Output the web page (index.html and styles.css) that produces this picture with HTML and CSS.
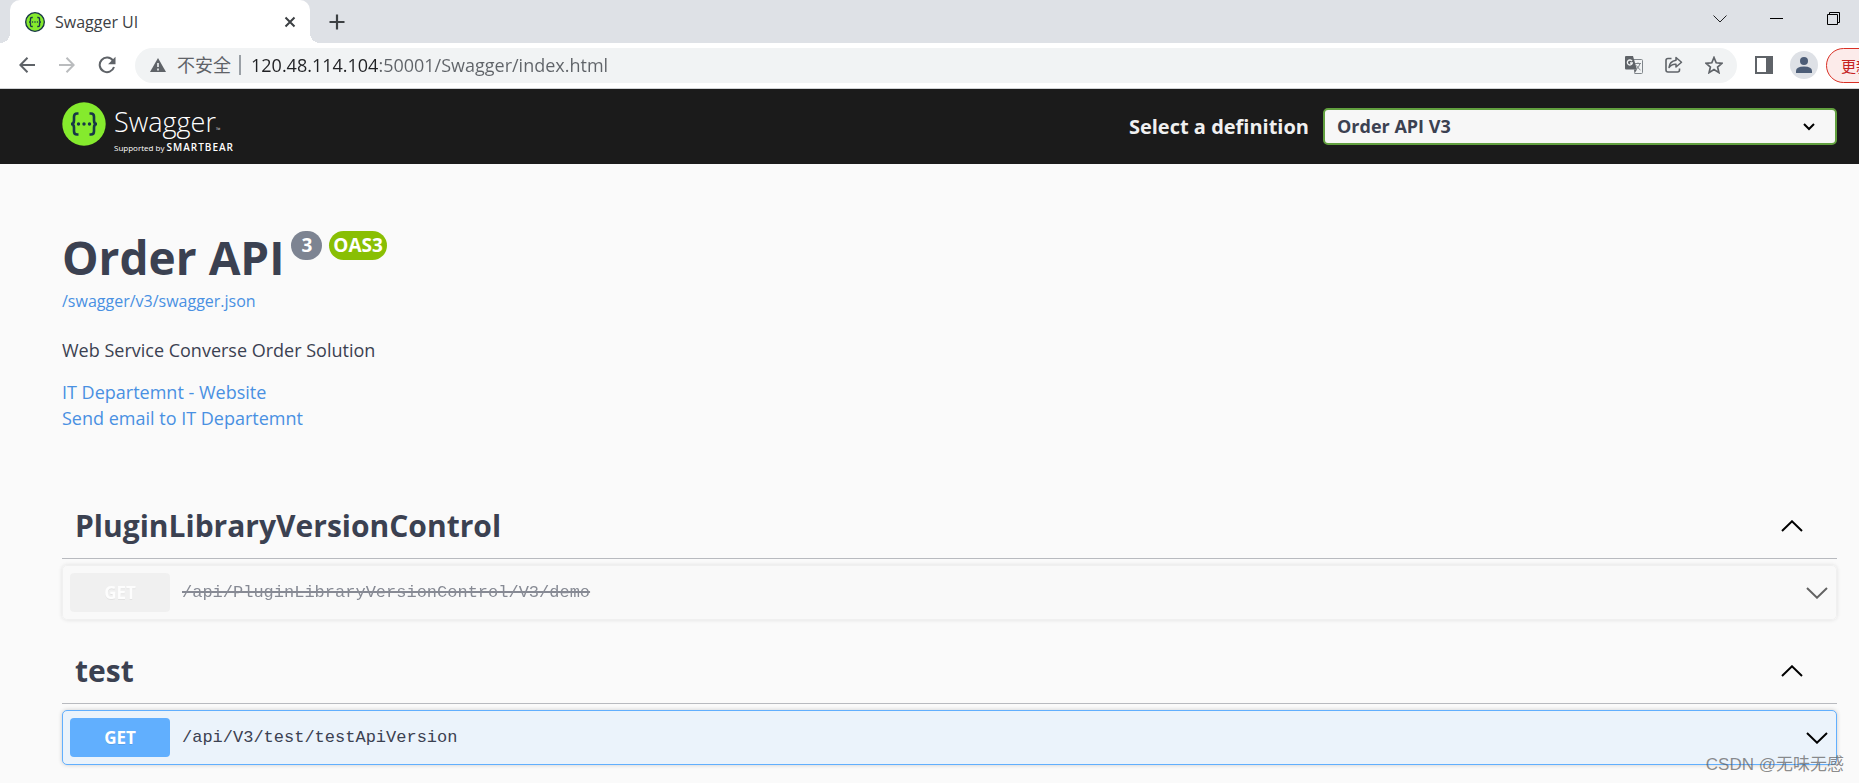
FILE: index.html
```html
<!DOCTYPE html>
<html lang="en">
<head>
    <meta charset="UTF-8">
    <meta name="viewport" content="width=device-width, initial-scale=1.0">
    <title>Swagger UI</title>
    <link rel="stylesheet" href="styles.css">
</head>
<body>
    <!-- Browser window -->
    <div class="tabstrip">
        <div class="tab">
            <svg class="favicon" viewBox="0 0 44 44"><circle cx="22" cy="22" r="20.5" fill="#85ea2d" stroke="#173647" stroke-width="3"/><g fill="none" stroke="#173647" stroke-width="3"><path d="M17 12h-2q-3 0-3 3v4q0 3-3 3q3 0 3 3v4q0 3 3 3h2M27 12h2q3 0 3 3v4q0 3 3 3q-3 0-3 3v4q0 3-3 3h-2"/></g><g fill="#173647"><circle cx="16.500" cy="22" r="1.800"/><circle cx="22" cy="22" r="1.800"/><circle cx="27.500" cy="22" r="1.800"/></g></svg>
            <span class="tab-title">Swagger UI</span>
            <button class="tab-close" aria-label="Close"><svg width="12" height="12" viewBox="0 0 12 12"><path d="M1.500 1.500l9 9M10.500 1.500l-9 9" stroke="#3c4043" stroke-width="2"/></svg></button>
        </div>
        <button class="tab-new" aria-label="New tab"><svg width="16" height="16" viewBox="0 0 16 16"><path d="M8 0.500v15M0.500 8h15" stroke="#3c4043" stroke-width="2.200"/></svg></button>
        <div class="window-controls">
            <button aria-label="Search tabs"><svg width="14" height="8" viewBox="0 0 14 8"><path d="M0.500 0.500L7 7l6.500-6.500" fill="none" stroke="#202124"/></svg></button>
            <button aria-label="Minimize"><svg width="13" height="13" viewBox="0 0 13 13"><path d="M0 6.500h13" stroke="#000"/></svg></button>
            <button aria-label="Restore"><svg width="13" height="13" viewBox="0 0 13 13"><path d="M0.500 2.500h10v10h-10zM2.500 2.500v-2h10v10h-2" fill="none" stroke="#000"/></svg></button>
        </div>
    </div>
    <div class="toolbar">
        <button class="tool" aria-label="Back"><svg width="16" height="16" viewBox="0 0 16 16"><path d="M16 8H1.500M8.500 0.800L1.300 8l7.200 7.200" fill="none" stroke="#5f6368" stroke-width="2"/></svg></button>
        <button class="tool" aria-label="Forward"><svg width="16" height="16" viewBox="0 0 16 16"><path d="M0 8h14.500M7.500 0.800L14.700 8l-7.200 7.200" fill="none" stroke="#babcbe" stroke-width="2"/></svg></button>
        <button class="tool" aria-label="Reload"><svg width="18" height="18" viewBox="0 0 18 18"><path d="M15 4.700A7.300 7.300 0 1 0 16 11" fill="none" stroke="#5f6368" stroke-width="2"/><path d="M17.500 0.800v7.400h-7.400z" fill="#5f6368"/></svg></button>
        <div class="omnibox">
            <svg width="16" height="14" viewBox="0 0 16 14"><path d="M8 0l8 14H0z" fill="#5f6368"/><path d="M8 5v4M8 10.500v2" stroke="#f1f3f4" stroke-width="1.600"/></svg>
            <label class="security" for="url">不安全</label>
            <input class="url" id="url" type="text" value="120.48.114.104:50001/Swagger/index.html">
            <button class="tool" aria-label="Translate"><svg width="18" height="18" viewBox="0 0 18 18"><path d="M7.500 3.500h9q1 0 1 1v12q0 1-1 1H9.500" fill="none" stroke="#80868b"/><path d="M1 0h7l4 13.500H1q-1 0-1-1V1q0-1 1-1z" fill="#5f6368"/><path d="M9 13.500h3l-2.500 4z" fill="#5f6368"/><path d="M7 5.200A2.500 2.500 0 1 0 7.300 7H5" fill="none" stroke="#f1f3f4" stroke-width="1.300"/><path d="M10 7.500h6M13 6.500v1M15 7.500q-1 4-4 6M11.500 9.500q1.500 3 4 4.500" fill="none" stroke="#80868b"/></svg></button>
            <button class="tool" aria-label="Share"><svg width="18" height="18" viewBox="0 0 18 18"><path d="M6.500 2.500H3q-2 0-2 2V14q0 2 2 2h9.500q2 0 2-2v-1.500" fill="none" stroke="#5f6368" stroke-width="1.600"/><path d="M11 1.500L16.500 6.200L11 11V8.200q-4.500-0.400-7 3.300q0.500-6 7-7.200z" fill="none" stroke="#5f6368" stroke-width="1.500" stroke-linejoin="round"/></svg></button>
            <button class="tool" aria-label="Bookmark"><svg width="18" height="18" viewBox="0 0 18 18"><path d="M9 1.500l2.200 5.300 5.700 0.500-4.300 3.700 1.300 5.600L9 13.600 4.100 16.600l1.300-5.600-4.300-3.700 5.700-0.500z" fill="none" stroke="#5f6368" stroke-width="1.700"/></svg></button>
        </div>
        <button class="tool" aria-label="Side panel"><svg width="18" height="18" viewBox="0 0 18 18"><path d="M0 0h18v18H0zM2 2v14h9V2z" fill="#5f6368" fill-rule="evenodd"/></svg></button>
        <button class="tool" aria-label="Profile"><svg width="28" height="28" viewBox="0 0 28 28"><circle cx="14" cy="14" r="14" fill="#dee1e6"/><circle cx="14" cy="10" r="4" fill="#4c5d77"/><path d="M6 22v-2q0-4.500 8-4.500t8 4.500v2z" fill="#4c5d77"/></svg></button>
        <div class="update-slot"><button class="update">更新</button></div>
    </div>

    <!-- Swagger UI -->
    <header class="topbar">
        <a class="logo" href="#">
            <svg width="44" height="44" viewBox="0 0 44 44"><circle cx="22" cy="22" r="21.700" fill="#85ea2d"/><g fill="none" stroke="#173647" stroke-width="2.600"><path d="M16.500 11.500h-1.500q-3 0-3 3.200v3.800q0 3.500-3 3.500q3 0 3 3.500v3.800q0 3.200 3 3.200h1.500M27.500 11.500h1.500q3 0 3 3.200v3.800q0 3.500 3 3.500q-3 0-3 3.500v3.800q0 3.200-3 3.200h-1.500"/></g><g fill="#173647"><circle cx="16.500" cy="22" r="1.700"/><circle cx="22" cy="22" r="1.700"/><circle cx="27.500" cy="22" r="1.700"/></g></svg>
            <span class="logo-text">
                <span class="logo-name">Swagger<small>™</small></span>
                <span class="logo-by">Supported by <b>SMARTBEAR</b></span>
            </span>
        </a>
        <div class="definition">
            <label for="select">Select a definition</label>
            <select id="select">
                <option>Order API V3</option>
            </select>
        </div>
    </header>

    <main class="wrapper">
        <section class="info">
            <h2 class="title">Order API <span class="version">3</span><span class="version oas">OAS3</span></h2>
            <a class="spec" href="#">/swagger/v3/swagger.json</a>
            <p class="description">Web Service Converse Order Solution</p>
            <div class="contact">
                <a href="#">IT Departemnt - Website</a>
                <a href="#">Send email to IT Departemnt</a>
            </div>
        </section>

        <section class="tag-section">
            <h3 class="tag">
                <a href="#">PluginLibraryVersionControl</a>
                <button aria-label="Collapse operation"><svg width="22" height="12" viewBox="0 0 22 12"><path d="M1 11L11 1.300L21 11" fill="none" stroke="#000" stroke-width="2"/></svg></button>
            </h3>
            <div class="opblock deprecated">
                <button class="method">GET</button>
                <a class="path" href="#">/api/PluginLibraryVersionControl/V3/demo</a>
                <button class="arrow" aria-label="Expand"><svg width="22" height="12" viewBox="0 0 22 12"><path d="M1 1L11 10.700L21 1" fill="none" stroke="#000" stroke-width="2"/></svg></button>
            </div>
        </section>

        <section class="tag-section">
            <h3 class="tag">
                <a href="#">test</a>
                <button aria-label="Collapse operation"><svg width="22" height="12" viewBox="0 0 22 12"><path d="M1 11L11 1.300L21 11" fill="none" stroke="#000" stroke-width="2"/></svg></button>
            </h3>
            <div class="opblock">
                <button class="method">GET</button>
                <a class="path" href="#">/api/V3/test/testApiVersion</a>
                <button class="arrow" aria-label="Expand"><svg width="22" height="12" viewBox="0 0 22 12"><path d="M1 1L11 10.700L21 1" fill="none" stroke="#000" stroke-width="2"/></svg></button>
            </div>
        </section>
    </main>
    <div class="watermark">CSDN @无味无感</div>
</body>
</html>
```

FILE: styles.css
```css
* {
    box-sizing: border-box;
}

body {
    margin: 0;
    min-height: 100vh;
    position: relative;
    background: #fafafa;
    color: #3b4151;
    font-family: "Open Sans", "Noto Sans", "Noto Sans CJK SC", sans-serif;
    font-size: 18px;
}

a {
    color: #4990e2;
    text-decoration: none;
}

button {
    display: flex;
    align-items: center;
    justify-content: center;
    padding: 0;
    border: 0;
    background: none;
    font-family: inherit;
    cursor: pointer;
}

/* Browser tab strip */
.tabstrip {
    display: flex;
    height: 43px;
    padding-left: 10px;
    background: #dee1e6;
}

.tab {
    position: relative;
    display: flex;
    align-items: center;
    width: 300px;
    padding: 0 14px 0 15px;
    border-radius: 10px 10px 0 0;
    background: #fff;
}

/* flared feet of the active tab */
.tab::before,
.tab::after {
    content: "";
    position: absolute;
    bottom: 0;
    width: 10px;
    height: 10px;
}

.tab::before {
    right: 100%;
    background: radial-gradient(circle at 0 0, transparent 10px, #fff 10px);
}

.tab::after {
    left: 100%;
    background: radial-gradient(circle at 100% 0, transparent 10px, #fff 10px);
}

.favicon {
    width: 20px;
    height: 20px;
}

.tab-title {
    flex: 1;
    margin-left: 10px;
    font-size: 16px;
    color: #3c4043;
}

.tab-new {
    width: 54px;
}

.window-controls {
    display: flex;
    gap: 6px;
    margin-left: auto;
    padding-bottom: 6px;
}

.window-controls button {
    width: 51px;
}

/* Browser toolbar */
.toolbar {
    display: flex;
    align-items: center;
    height: 46px;
    padding: 0 0 1px 7px;
    border-bottom: 1px solid #d0d2d5;
    background: #fff;
}

.tool {
    flex: none;
    width: 40px;
    height: 35px;
}

.omnibox {
    display: flex;
    flex: 1;
    align-items: center;
    height: 35px;
    margin: 0 7px 0 8px;
    padding: 0 3px 0 15px;
    border-radius: 18px;
    background: #f1f3f4;
}

.security {
    margin-left: 11px;
    padding-right: 8px;
    border-right: 2px solid #9aa0a6;
    font-size: 18px;
    line-height: 20px;
    color: #5f6368;
}

.url {
    flex: 1;
    padding: 0 0 0 10px;
    border: 0;
    outline: 0;
    font-family: inherit;
    font-size: 18px;
    color: transparent;
    /* host is darker than the rest of the address */
    background: linear-gradient(to right, #202124 138px, #5f6368 138px);
    -webkit-background-clip: text;
    background-clip: text;
}

.update-slot {
    flex: 0 0 35px;
    overflow: hidden;
}

.update {
    width: 90px;
    height: 35px;
    margin-left: 2px;
    padding-left: 14px;
    justify-content: flex-start;
    border: 1px solid #d93025;
    border-radius: 18px;
    background: #fcebea;
    color: #c5221f;
    font-size: 15px;
}

/* Swagger top bar */
.topbar {
    display: flex;
    align-items: center;
    justify-content: space-between;
    height: 75px;
    padding: 0 22px 0 62px;
    background: #1b1b1b;
}

.logo {
    display: flex;
    align-items: flex-start;
    padding-top: 2px;
    color: #fff;
}

.logo-text {
    display: flex;
    flex-direction: column;
    margin-left: 8px;
}

.logo-name {
    font-size: 27px;
    font-weight: 300;
    line-height: 40px;
}

.logo-name small {
    font-size: 6px;
    line-height: 6px;
}

.logo-by {
    font-size: 8px;
    line-height: 10px;
}

.logo-by b {
    font-size: 10px;
    font-weight: 600;
    letter-spacing: 1px;
}

.definition {
    display: flex;
    align-items: center;
    gap: 14px;
    color: #f0f0f0;
    font-size: 20px;
    font-weight: 700;
}

.definition select {
    width: 514px;
    height: 37px;
    padding: 0 48px 2px 12px;
    border: 2px solid #62a03f;
    border-radius: 5px;
    appearance: none;
    background: #f7f7f7 url("data:image/svg+xml,%3Csvg xmlns='http://www.w3.org/2000/svg' viewBox='0 0 12 8'%3E%3Cpath d='M1 1l5 5 5-5' fill='none' stroke='black' stroke-width='2'/%3E%3C/svg%3E") no-repeat right 20px center / 12px 8px;
    color: #3b4151;
    font-family: inherit;
    font-size: 18px;
    font-weight: 700;
}

/* API info */
.wrapper {
    padding: 61px 22px 0 62px;
}

.info {
    margin-bottom: 62px;
}

.title {
    display: flex;
    align-items: flex-start;
    margin: 0;
    font-size: 46px;
    line-height: 64px;
}

.version {
    margin: 6px 0 0 7px;
    padding: 0 10px;
    border-radius: 15px;
    background: #7d8492;
    color: #fff;
    font-size: 19px;
    line-height: 29px;
}

.version.oas {
    padding: 0 4px;
    background: #89bf04;
}

.spec {
    display: block;
    font-size: 16px;
    line-height: 24px;
}

.description {
    margin: 24px 0 16px;
    line-height: 26px;
}

.contact {
    display: flex;
    flex-direction: column;
    align-items: flex-start;
    line-height: 26px;
}

/* Operations */
.tag-section {
    margin-bottom: 18px;
}

.tag-section:last-child {
    margin-bottom: 0;
}

.tag {
    display: flex;
    align-items: center;
    justify-content: space-between;
    height: 66px;
    margin: 0 0 6px;
    padding: 0 34px 0 13px;
    border-bottom: 1px solid rgba(59, 65, 81, 0.35);
    font-size: 30px;
}

.tag a {
    color: #3b4151;
}

.opblock {
    display: flex;
    align-items: center;
    height: 55px;
    padding: 0 8px 0 7px;
    border: 1px solid #61affe;
    border-radius: 5px;
    background: #ebf3fb;
    box-shadow: 0 0 4px rgba(0, 0, 0, 0.19);
}

.method {
    width: 100px;
    height: 39px;
    border-radius: 4px;
    background: #61affe;
    color: #fff;
    font-size: 17px;
    font-weight: 700;
    text-shadow: 0 1px 0 rgba(0, 0, 0, 0.1);
}

.path {
    flex: 1;
    margin-left: 12px;
    color: #3b4151;
    font-family: "Liberation Mono", monospace;
    font-size: 17px;
}

.deprecated {
    border-color: #ebebeb;
    background: rgba(235, 235, 235, 0.1);
    opacity: 0.6;
}

.deprecated .method {
    background: #ebebeb;
}

.deprecated .path {
    text-decoration: line-through 2px;
}

.watermark {
    position: absolute;
    right: 15px;
    bottom: 6px;
    color: rgba(90, 90, 90, 0.7);
    font-family: "Liberation Sans", "Noto Sans CJK SC", sans-serif;
    font-size: 17px;
    line-height: 24px;
}
```
